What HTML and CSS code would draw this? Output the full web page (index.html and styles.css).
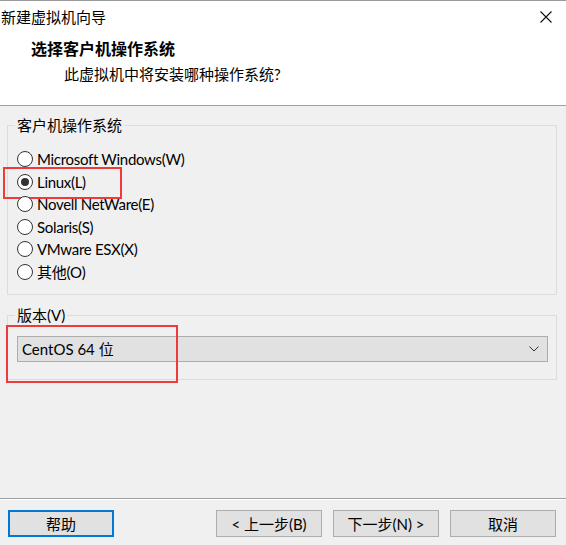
FILE: index.html
```html
<!DOCTYPE html>
<html lang="zh-CN">
<head>
<meta charset="utf-8">
<title>新建虚拟机向导</title>
<link rel="stylesheet" href="styles.css">
</head>
<body>
<div class="window">
  <div class="header">
    <div class="titlebar">
      <span class="title">新建虚拟机向导</span>
      <span class="close" aria-label="关闭">
        <svg width="12" height="12" viewBox="0 0 12 12"><path d="M0.5 0.5 L11.5 11.5 M11.5 0.5 L0.5 11.5" stroke="#111" stroke-width="1.1" fill="none"/></svg>
      </span>
    </div>
    <div class="heading">选择客户机操作系统</div>
    <div class="subheading">此虚拟机中将安装哪种操作系统?</div>
  </div>

  <div class="content">
    <fieldset class="group group-os">
      <legend>客户机操作系统</legend>
      <div class="radio-list">
        <div class="radio"><span class="dot"></span><span class="label">Microsoft Windows(W)</span></div>
        <div class="radio checked marked"><span class="dot"></span><span class="label">Linux(L)</span></div>
        <div class="radio"><span class="dot"></span><span class="label">Novell NetWare(E)</span></div>
        <div class="radio"><span class="dot"></span><span class="label">Solaris(S)</span></div>
        <div class="radio"><span class="dot"></span><span class="label">VMware ESX(X)</span></div>
        <div class="radio"><span class="dot"></span><span class="label">其他(O)</span></div>
      </div>
    </fieldset>

    <fieldset class="group group-ver">
      <legend>版本(V)</legend>
      <div class="combo-wrap">
        <div class="combo">
          <span class="combo-text">CentOS 64 位</span>
          <svg class="chev" width="10" height="6" viewBox="0 0 10 6"><path d="M0.5 0.5 L5 5 L9.5 0.5" stroke="#333" stroke-width="1" fill="none"/></svg>
        </div>
        <div class="mark mark-combo"></div>
      </div>
    </fieldset>
  </div>

  <div class="footer">
    <div class="btn default">帮助</div>
    <div class="btn-group">
      <div class="btn">&lt; 上一步(B)</div>
      <div class="btn">下一步(N) &gt;</div>
      <div class="btn">取消</div>
    </div>
  </div>
</div>
</body>
</html>
```

FILE: styles.css
```css
* { box-sizing: border-box; }
html, body { margin: 0; padding: 0; }
body {
  background: #f0f0f0;
  font-family: "Lato", "Noto Sans CJK SC", sans-serif;
  font-size: 15px;
  color: #000;
}
.window {
  width: 566px;
  height: 545px;
  border-top: 1px solid #9a9a9a;
  display: flex;
  flex-direction: column;
  background: #f0f0f0;
}
.header {
  background: #fff;
  height: 105px;
  border-bottom: 1px solid #a0a0a0;
}
.titlebar {
  height: 32px;
  display: flex;
  align-items: center;
  justify-content: space-between;
  padding-left: 1px;
  padding-right: 14px;
}
.title { font-size: 15px; line-height: 20px; }
.close { display: flex; width: 12px; height: 12px; }
.heading {
  font-weight: bold;
  font-size: 16px;
  line-height: 22px;
  padding-left: 31px;
  margin-top: 5px;
}
.subheading {
  font-size: 15px;
  line-height: 22px;
  padding-left: 64px;
  margin-top: 3px;
}
.content {
  padding: 0 9px 0 7px;
}
.group {
  margin: 0;
  border: 1px solid #dcdcdc;
  padding: 0;
}
.group legend {
  padding: 0 2px;
  margin-left: 7px;
  font-size: 15px;
  line-height: 20px;
}
.group-os { margin-top: 9px; }
.radio-list {
  padding: 13px 0 11px 9px;
}
.radio {
  display: flex;
  align-items: center;
  height: 22.5px;
  position: relative;
  width: max-content;
}
.dot {
  width: 16px;
  height: 16px;
  border: 1px solid #333;
  border-radius: 50%;
  background: #fff;
  display: flex;
  align-items: center;
  justify-content: center;
  margin-right: 4px;
}
.radio.checked .dot::after {
  content: "";
  width: 8px;
  height: 8px;
  border-radius: 50%;
  background: #333;
}
.label { line-height: 20px; letter-spacing: -0.3px; }
.radio.marked::before {
  content: "";
  position: absolute;
  left: -14px;
  top: -4px;
  width: 115px;
  height: 28px;
  border: 2px solid #f03a3a;
}
.group-ver { margin-top: 10px; }
.combo-wrap {
  position: relative;
  padding: 11px 8px 17px 9px;
}
.combo {
  height: 26px;
  border: 1px solid #adadad;
  background: #e1e1e1;
  display: flex;
  align-items: center;
  justify-content: space-between;
  padding: 0 8px 0 4px;
}
.combo-text { line-height: 20px; }
.mark-combo {
  position: absolute;
  left: -2px;
  top: 0px;
  width: 172px;
  height: 58px;
  border: 2px solid #f03a3a;
}
.footer {
  margin-top: auto;
  border-top: 1px solid #a0a0a0;
  box-shadow: inset 0 1px 0 #fff;
  height: 47px;
  display: flex;
  align-items: flex-start;
  justify-content: space-between;
  padding: 11px 10px 0 8px;
}
.btn-group { display: flex; gap: 11px; }
.btn {
  width: 106px;
  height: 27px;
  border: 1px solid #adadad;
  background: #e1e1e1;
  display: flex;
  align-items: center;
  justify-content: center;
  font-size: 15px;
  line-height: 20px;
}
.btn.default { border: 2px solid #0078d7; }
```
